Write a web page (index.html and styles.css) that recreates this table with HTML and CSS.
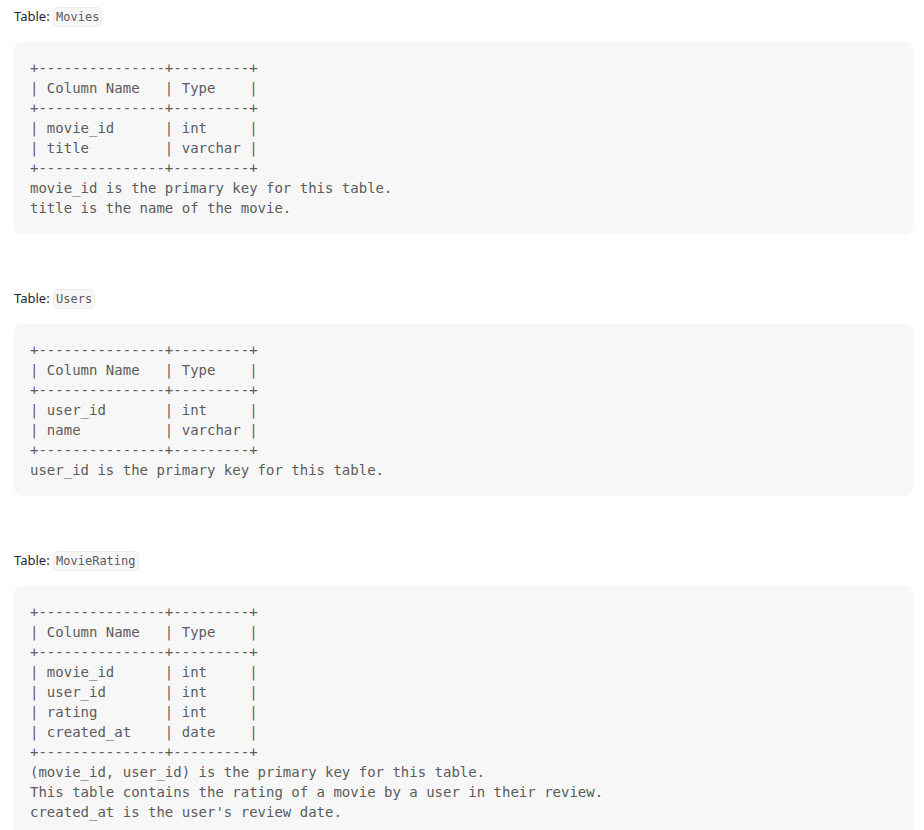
FILE: index.html
```html
<!DOCTYPE html>
<html>
<head>
<meta charset="utf-8">
<link rel="stylesheet" href="styles.css">
</head>
<body>
<div class="page">
<p class="label">Table: <code>Movies</code></p>
<pre class="block">+---------------+---------+
| Column Name   | Type    |
+---------------+---------+
| movie_id      | int     |
| title         | varchar |
+---------------+---------+
movie_id is the primary key for this table.
title is the name of the movie.</pre>

<p class="label">Table: <code>Users</code></p>
<pre class="block">+---------------+---------+
| Column Name   | Type    |
+---------------+---------+
| user_id       | int     |
| name          | varchar |
+---------------+---------+
user_id is the primary key for this table.</pre>

<p class="label">Table: <code>MovieRating</code></p>
<pre class="block">+---------------+---------+
| Column Name   | Type    |
+---------------+---------+
| movie_id      | int     |
| user_id       | int     |
| rating        | int     |
| created_at    | date    |
+---------------+---------+
(movie_id, user_id) is the primary key for this table.
This table contains the rating of a movie by a user in their review.
created_at is the user's review date.</pre>
</div>
</body>
</html>
```

FILE: styles.css
```css
html, body {
  margin: 0;
  padding: 0;
  background: #ffffff;
}
.page {
  padding: 6px 11px 0 14px;
  font-family: "Noto Sans", "Open Sans", sans-serif;
  color: #262626;
}
.label {
  margin: 0 0 16px 0;
  font-size: 13px;
  line-height: 20px;
  height: 20px;
}
.label code {
  font-family: "DejaVu Sans Mono", monospace;
  font-size: 12px;
  line-height: 18px;
  color: #5c5c5c;
  background: #f7f7f7;
  border: 1px solid #ececec;
  border-radius: 5px;
  padding: 0 2px;
  display: inline-block;
  vertical-align: middle;
  margin-top: -2px;
}
.block {
  margin: 0 0 54px 0;
  padding: 16px;
  background: #f7f7f7;
  border-radius: 8px;
  font-family: "DejaVu Sans Mono", monospace;
  font-size: 14px;
  line-height: 20px;
  color: #5c5c5c;
  white-space: pre;
}
```
